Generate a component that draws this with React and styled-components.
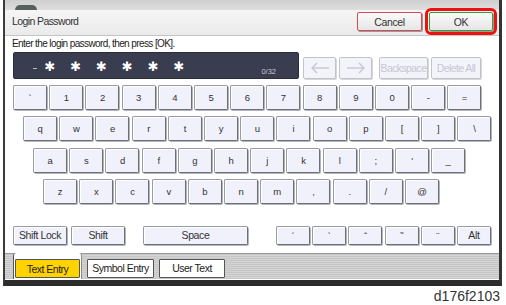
import React from 'react';
import styled, { createGlobalStyle } from 'styled-components';

const FONT = `"Liberation Sans", Arial, sans-serif`;

const GlobalStyle = createGlobalStyle`
  html, body {
    margin: 0;
    padding: 0;
    background: #ffffff;
  }
  * {
    box-sizing: border-box;
  }
`;

const Page = styled.div`
  width: 506px;
  height: 305px;
  background: #ffffff;
  font-family: ${FONT};
  color: #333;
  overflow: hidden;
`;

const Frame = styled.div`
  margin-left: 3px;
  width: 499px;
  height: 286px;
  display: flex;
  flex-direction: column;
  background: #ffffff;
  border-left: 2px solid #3c3c3c;
  border-right: 3px solid #333;
  border-bottom: 6px solid #2c2c2c;
`;

const TopStrip = styled.div`
  height: 10px;
  flex: none;
  background: linear-gradient(#cfcfcf, #dedede);
  padding-left: 10px;
  padding-top: 5px;
`;

const TopBump = styled.div`
  width: 22px;
  height: 5px;
  border-radius: 10px 10px 0 0;
  background: #55605f;
`;

const TitleBar = styled.div`
  height: 26px;
  flex: none;
  display: flex;
  align-items: flex-start;
  padding: 2px 6px 0 7px;
  background: linear-gradient(#f6f6f6, #eaeaea);
  border-bottom: 1px solid #c4c4c4;
`;

const Title = styled.div`
  font-size: 10.5px;
  letter-spacing: -0.6px;
  line-height: 19px;
  color: #333;
  flex: 1;
`;

const HeadButton = styled.button`
  width: ${p => p.$w}px;
  height: 19px;
  margin-left: ${p => p.$ml || 0}px;
  padding: 0;
  font-family: ${FONT};
  font-size: 10.5px;
  letter-spacing: -0.4px;
  color: #333;
  background: linear-gradient(#fafafa, #e6e6e6);
  border: 1px solid ${p => p.$tone};
  border-radius: 2px;
  box-shadow: 1px 1px 0 #9a9a9a;
  outline: ${p => (p.$mark ? '3px solid #ee1111' : 'none')};
  outline-offset: 1px;
`;

const Content = styled.div`
  flex: 1;
  display: flex;
  flex-direction: column;
  padding-left: 8px;
`;

const Prompt = styled.div`
  height: 16px;
  line-height: 16px;
  font-size: 10px;
  letter-spacing: -0.6px;
  margin-left: -1px;
  color: #222;
`;

const InputRow = styled.div`
  display: flex;
  align-items: flex-end;
  height: 27px;
`;

const Field = styled.div`
  width: 286px;
  height: 27px;
  display: flex;
  align-items: center;
  padding-left: 19px;
  padding-right: 22px;
  background: #3a3c50;
  border: 1px solid #2a2c3a;
  border-radius: 2px;
`;

const Cursor = styled.span`
  width: 4px;
  height: 1px;
  margin-top: 5px;
  background: #b8b8c0;
`;

const Mask = styled.span`
  width: 25.8px;
  text-align: center;
  color: #ffffff;
  font-family: "DejaVu Sans", sans-serif;
  font-size: 13px;
  line-height: 15px;
  margin-top: 1px;
  &:first-of-type {
    margin-left: 11px;
  }
`;

const Counter = styled.span`
  margin-left: auto;
  align-self: flex-end;
  margin-bottom: 2px;
  font-size: 7.5px;
  color: #c8c8d0;
`;

const DimButton = styled.button`
  width: ${p => p.$w}px;
  height: 22px;
  margin-left: ${p => p.$ml}px;
  padding: 0;
  display: flex;
  align-items: center;
  justify-content: center;
  white-space: nowrap;
  font-family: ${FONT};
  font-size: 10.5px;
  letter-spacing: -0.6px;
  color: #c6c6d2;
  background: #f3f3fa;
  border: 1px solid #c2c2ca;
  border-radius: 2px;
  box-shadow: 1px 1px 0 #d6d6dc;
`;

const KeyRow = styled.div`
  display: flex;
  gap: 2.2px;
  padding-left: ${p => p.$indent || 0}px;
  margin-top: ${p => p.$mt}px;
`;

const Key = styled.button`
  width: ${p => p.$w || 34}px;
  height: ${p => p.$h || 25}px;
  margin-left: ${p => p.$ml || 0}px;
  padding: 0;
  white-space: nowrap;
  font-family: ${FONT};
  font-size: ${p => p.$fs || 9.5}px;
  letter-spacing: -0.4px;
  color: #333;
  background: #f1f1fb;
  border: 1px solid #9a9aa4;
  border-right-color: #6f6f78;
  border-bottom-color: #6f6f78;
  border-radius: 2px;
  box-shadow: inset 1px 1px 0 #ffffff, 1px 1px 0 #b4b4bc;
`;

const TabStrip = styled.div`
  margin-top: 8px;
  margin-left: -8px;
  height: 26px;
  display: flex;
  align-items: flex-start;
  padding-left: 8px;
  background: repeating-linear-gradient(#c6c6c6 0 1px, #d4d4d4 1px 2px);
  border-top: 1px solid #9a9a9a;
`;

const TabWell = styled.div`
  height: 26px;
  margin-top: -1px;
  padding: 6px 1px 0 1px;
  background: #ffffff;
  border-left: 1px solid #555;
  border-right: 1px solid #8a8a8a;
  border-radius: 3px 3px 0 0;
`;

const Tab = styled.button`
  width: ${p => p.$w}px;
  height: 19px;
  margin-left: ${p => p.$ml || 0}px;
  margin-top: ${p => (p.$active ? 0 : 5)}px;
  padding: 0;
  white-space: nowrap;
  font-family: ${FONT};
  font-size: 10.5px;
  letter-spacing: -0.5px;
  color: #222;
  background: ${p => (p.$active ? '#ffd200' : '#ffffff')};
  border: 1px solid #555;
  border-radius: 1px;
`;

const Caption = styled.div`
  text-align: right;
  padding-right: 6px;
  font-family: "Liberation Sans", Arial, sans-serif;
  font-size: 14px;
  line-height: 16px;
  margin-top: 2px;
  color: #333;
`;

const Arrow = ({ dir }) => (
  <svg width="20" height="12" viewBox="0 0 20 12">
    <g fill="none" stroke="#c6c6d2" strokeWidth="1.4">
      {dir === 'left' ? (
        <>
          <line x1="2" y1="6" x2="19" y2="6" />
          <polyline points="7,1 2,6 7,11" />
        </>
      ) : (
        <>
          <line x1="1" y1="6" x2="18" y2="6" />
          <polyline points="13,1 18,6 13,11" />
        </>
      )}
    </g>
  </svg>
);

const rows = [
  { indent: 0, mt: 6, keys: ['`', '1', '2', '3', '4', '5', '6', '7', '8', '9', '0', '-', '='] },
  { indent: 10, mt: 6.3, keys: ['q', 'w', 'e', 'r', 't', 'y', 'u', 'i', 'o', 'p', '[', ']', '\\'] },
  { indent: 20, mt: 6.3, keys: ['a', 's', 'd', 'f', 'g', 'h', 'j', 'k', 'l', ';', "'", '_'] },
  { indent: 30, mt: 6.3, keys: ['z', 'x', 'c', 'v', 'b', 'n', 'm', ',', '.', '/', '@'] }
];

const accents = ['\u00B4', '`', '\u02C6', '\u02DC', '\u00A8'];

export default function App() {
  return (
    <Page>
      <GlobalStyle />
      <Frame>
        <TopStrip>
          <TopBump />
        </TopStrip>
        <TitleBar>
          <Title>Login Password</Title>
          <HeadButton $w={65} $tone="#d44a5a">Cancel</HeadButton>
          <HeadButton $w={64} $ml={7} $tone="#3c9c3c" $mark>OK</HeadButton>
        </TitleBar>
        <Content>
          <Prompt>Enter the login password, then press [OK].</Prompt>
          <InputRow>
            <Field>
              <Cursor />
              {[0, 1, 2, 3, 4, 5].map(i => (
                <Mask key={i}>{'\u2731'}</Mask>
              ))}
              <Counter>0/32</Counter>
            </Field>
            <DimButton $w={33} $ml={4}><Arrow dir="left" /></DimButton>
            <DimButton $w={33} $ml={3}><Arrow dir="right" /></DimButton>
            <DimButton $w={49} $ml={7}>Backspace</DimButton>
            <DimButton $w={50} $ml={3}>Delete All</DimButton>
          </InputRow>
          {rows.map((row, r) => (
            <KeyRow key={r} $indent={row.indent} $mt={row.mt}>
              {row.keys.map(k => (
                <Key key={k}>{k}</Key>
              ))}
            </KeyRow>
          ))}
          <KeyRow $mt={22}>
            <Key $w={54} $h={19} $fs={10.5}>Shift Lock</Key>
            <Key $w={54} $h={19} $fs={10.5} $ml={1.8}>Shift</Key>
            <Key $w={105} $h={19} $fs={10.5} $ml={15.8}>Space</Key>
            {accents.map((a, i) => (
              <Key key={a} $h={19} $ml={i === 0 ? 25.8 : 0}>{a}</Key>
            ))}
            <Key $h={19} $fs={10.5}>Alt</Key>
          </KeyRow>
          <TabStrip>
            <TabWell>
              <Tab $w={65} $active>Text Entry</Tab>
            </TabWell>
            <Tab $w={67} $ml={5}>Symbol Entry</Tab>
            <Tab $w={66} $ml={5}>User Text</Tab>
          </TabStrip>
        </Content>
      </Frame>
      <Caption>d176f2103</Caption>
    </Page>
  );
}
